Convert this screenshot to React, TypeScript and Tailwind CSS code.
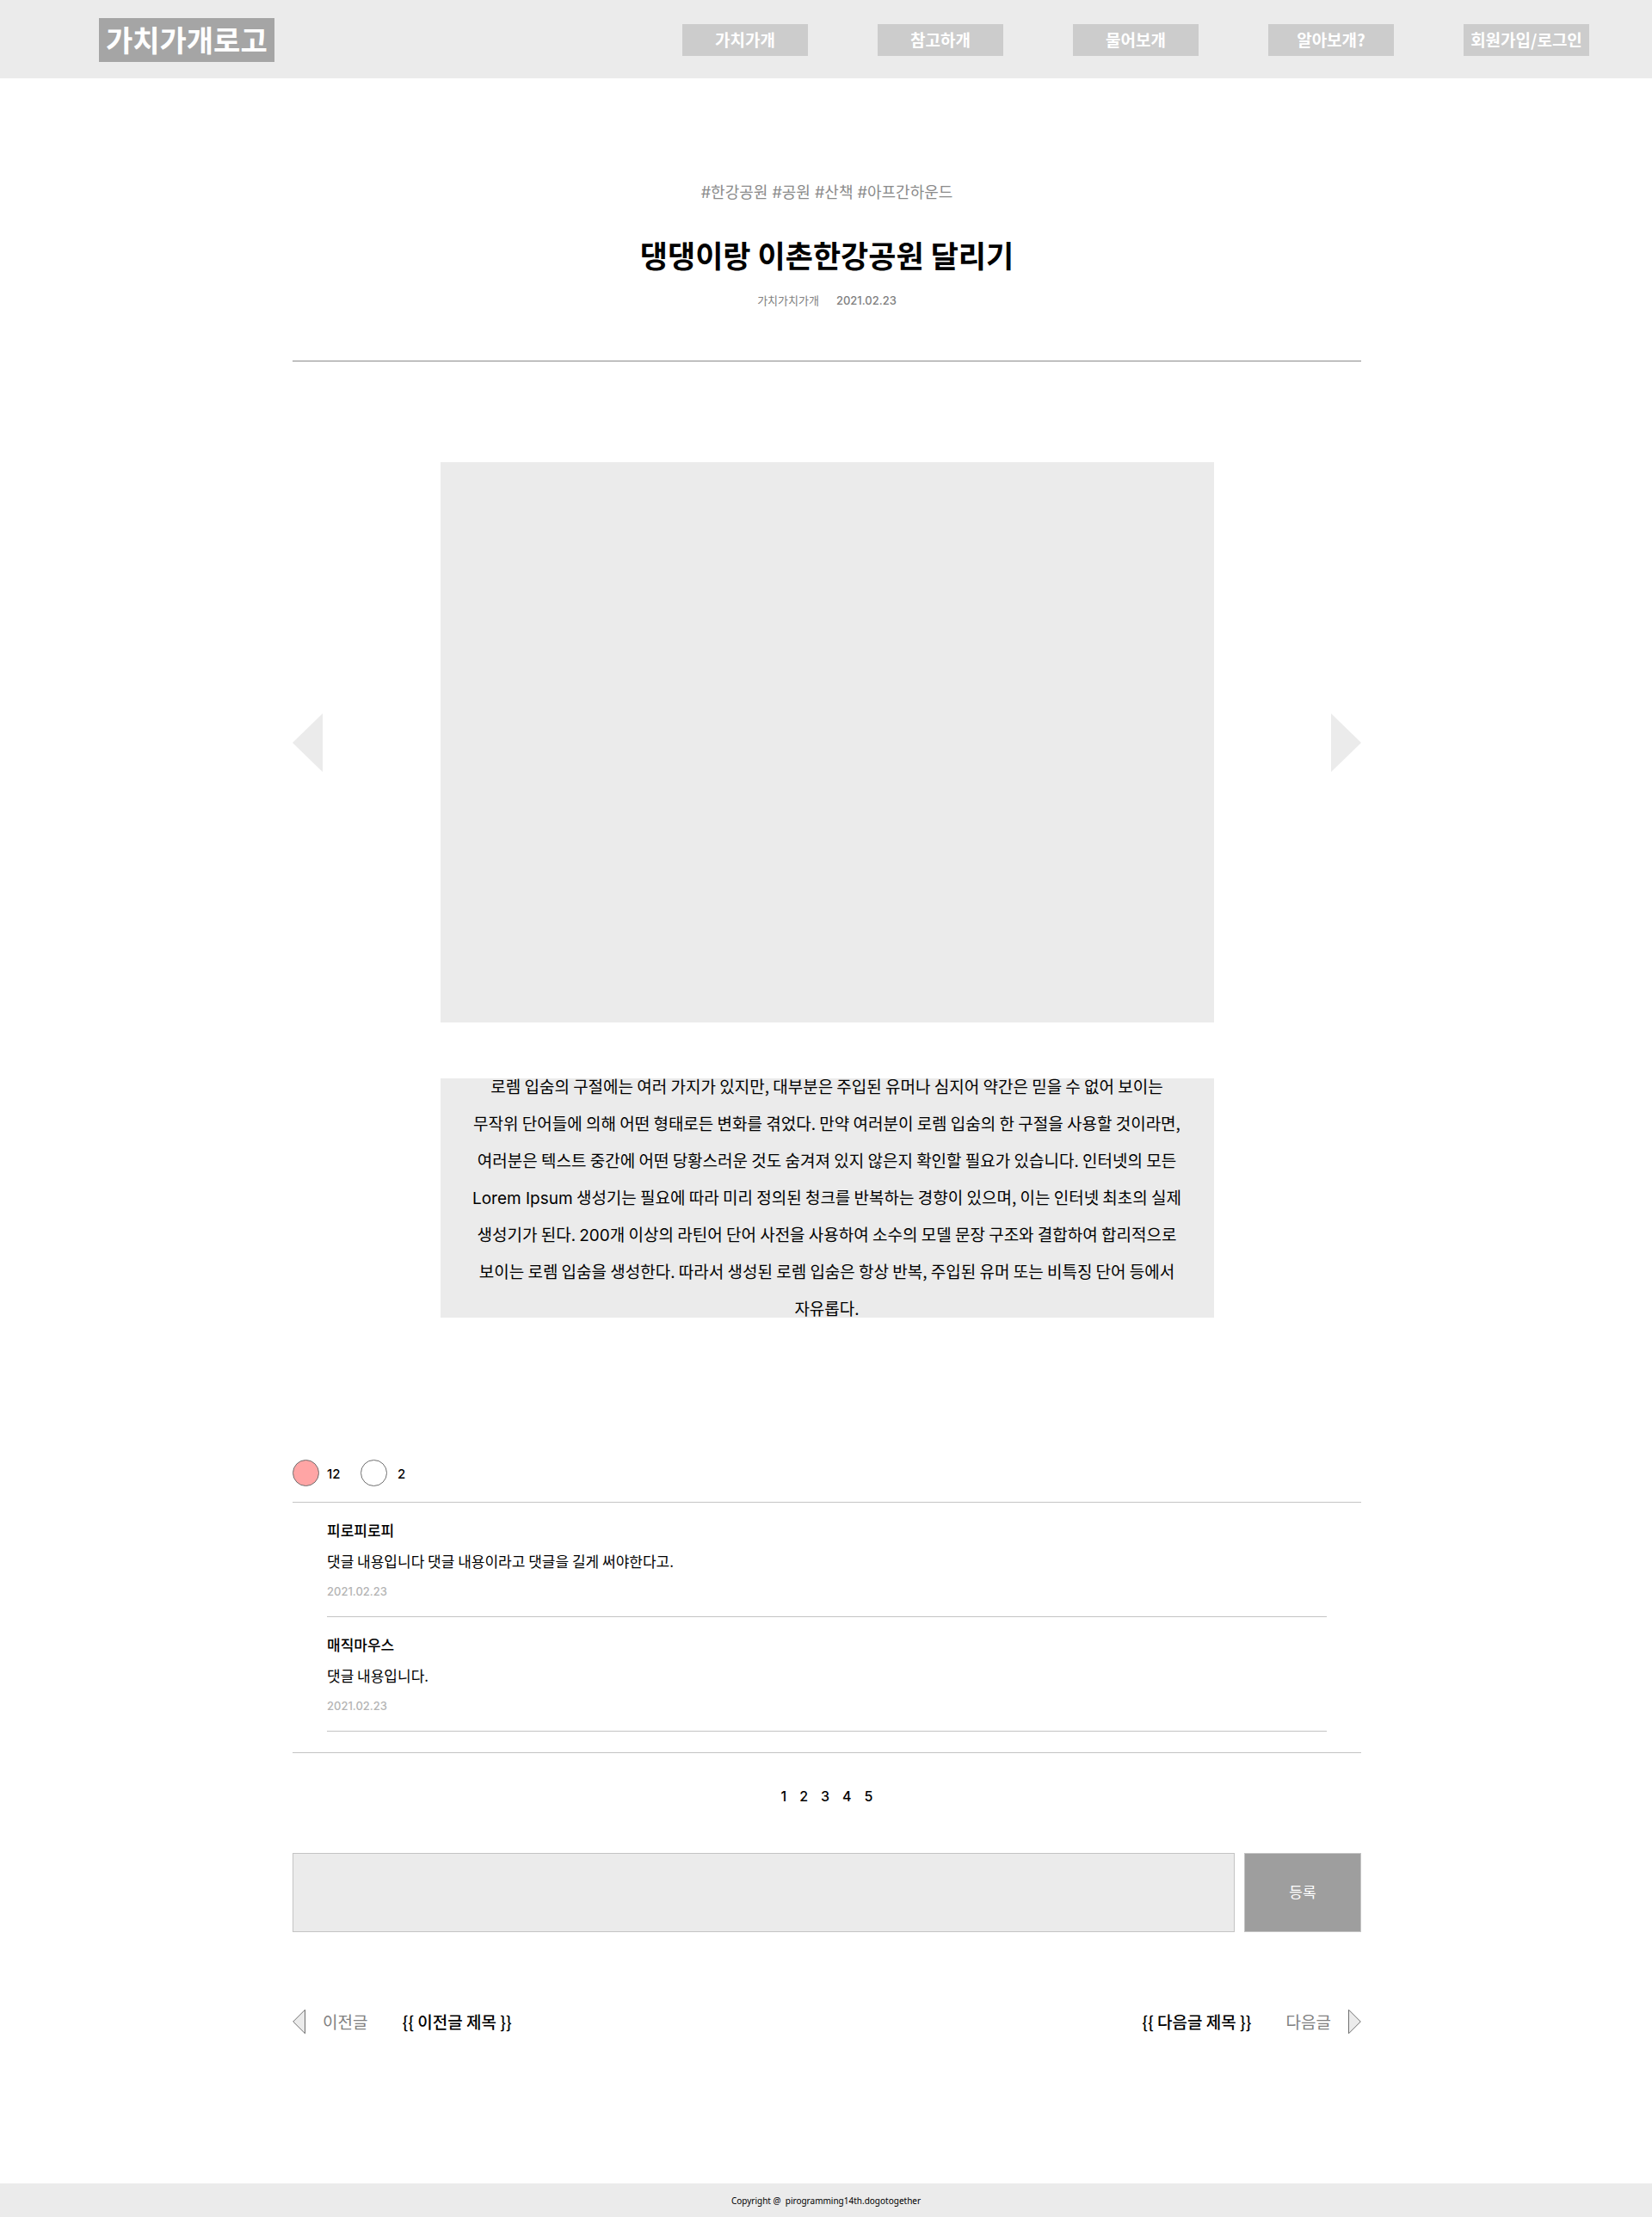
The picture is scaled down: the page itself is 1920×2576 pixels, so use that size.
const kr = "font-['Noto_Sans_CJK_KR','Noto_Sans',sans-serif]";
const latin = "font-['Inter','Noto_Sans_CJK_KR',sans-serif]";

const menu = ["가치가개", "참고하개", "물어보개", "알아보개?", "회원가입/로그인"];
const pages = [1, 2, 3, 4, 5];
const comments = [
  {
    author: "피로피로피",
    text: "댓글 내용입니다 댓글 내용이라고 댓글을 길게 써야한다고.",
    date: "2021.02.23",
  },
  { author: "매직마우스", text: "댓글 내용입니다.", date: "2021.02.23" },
];

function Header() {
  return (
    <header className="flex items-center justify-between bg-[#ebebeb] pt-[21px] pr-[73px] pb-[19px] pl-[115px]">
      <a
        href="#"
        className="bg-[#a5a5a5] px-2 pb-0.5 text-[34px] leading-[49px] font-bold whitespace-nowrap text-white"
      >
        가치가개로고
      </a>
      <nav className="-mt-px flex gap-[81px]">
        {menu.map((item) => (
          <a
            key={item}
            href="#"
            className="w-[146px] bg-[#cccccc] pb-0.5 text-center text-[19px] leading-[35px] font-bold whitespace-nowrap text-white"
          >
            {item}
          </a>
        ))}
      </nav>
    </header>
  );
}

function SlideArrow({ label, points }: { label: string; points: string }) {
  return (
    <button type="button" aria-label={label} className="shrink-0">
      <svg width="35" height="68" viewBox="0 0 35 68" className="fill-[#ebebeb]">
        <polygon points={points} />
      </svg>
    </button>
  );
}

function PostArrow({ points }: { points: string }) {
  return (
    <svg
      width="15"
      height="30"
      viewBox="0 0 15 30"
      aria-hidden="true"
      className="shrink-0 fill-[#ebebeb] stroke-[#707070]"
    >
      <polygon points={points} />
    </svg>
  );
}

export default function App() {
  return (
    <div className={`bg-white text-black ${kr}`}>
      <Header />

      <main className="mx-auto max-w-[1244px] pl-0.5">
        <article>
          <div className="border-b border-[#8b8b8b] pt-[119px] pb-[60px] text-center">
            <p className={`text-[18px] leading-7 text-[#8b8b8b] ${latin}`}>
              #한강공원 #공원 #산책 #아프간하운드
            </p>
            <h1 className="mt-[34px] text-[35px] leading-12 font-bold">
              댕댕이랑 이촌한강공원 달리기
            </h1>
            <p className="mt-[19px] flex justify-center gap-5 text-[13px] leading-5 text-[#808080]">
              <span>가치가치가개</span>
              <time className={`font-medium ${latin}`}>2021.02.23</time>
            </p>
          </div>

          <div className="mt-[117px] flex items-center justify-between gap-10">
            <SlideArrow label="이전 사진" points="0,34 35,0 35,68" />
            <div className="h-[651px] w-[899px] bg-[#ebebeb]" />
            <SlideArrow label="다음 사진" points="35,34 0,0 0,68" />
          </div>

          <div className="mx-auto mt-[65px] flex h-[278px] max-w-[899px] items-center justify-center bg-[#ebebeb] pb-1">
            <p className="max-w-[840px] text-center text-[19px] leading-[43px] break-keep">
              로렘 입숨의 구절에는 여러 가지가 있지만, 대부분은 주입된 유머나 심지어 약간은 믿을 수
              없어 보이는
              <br />
              무작위 단어들에 의해 어떤 형태로든 변화를 겪었다. 만약 여러분이 로렘 입숨의 한 구절을
              사용할 것이라면, 여러분은 텍스트 중간에 어떤 당황스러운 것도 숨겨져 있지 않은지 확인할
              필요가 있습니다. 인터넷의 모든
              <br />
              <span className={`leading-none ${latin}`}>Lorem Ipsum</span> 생성기는 필요에 따라 미리
              정의된 청크를 반복하는 경향이 있으며, 이는 인터넷 최초의 실제
              <br />
              생성기가 된다. <span className={`leading-none ${latin}`}>200</span>개 이상의 라틴어
              단어 사전을 사용하여 소수의 모델 문장 구조와 결합하여 합리적으로
              <br />
              보이는 로렘 입숨을 생성한다. 따라서 생성된 로렘 입숨은 항상 반복, 주입된 유머 또는
              비특징 단어 등에서
              <br />
              자유롭다.
            </p>
          </div>
        </article>

        <div className={`mt-[165px] flex items-center text-[15px] leading-5 font-medium ${latin}`}>
          <button type="button" className="flex items-center gap-[9px]">
            <span className="size-[31px] rounded-full border border-[#707070] bg-[#ffa5a5]" />
            <span className="w-[39px] pt-0.5 text-left">12</span>
          </button>
          <button type="button" className="flex items-center gap-3">
            <span className="size-[31px] rounded-full border border-[#707070] bg-white" />
            <span className="pt-0.5">2</span>
          </button>
        </div>

        <ul className="mt-[18px] border-y border-[#c4c4c4] px-10 pb-6">
          {comments.map((comment) => (
            <li key={comment.author} className="border-b border-[#c4c4c4] pt-5 pb-[19px]">
              <h2 className="text-[17px] leading-6 font-medium">{comment.author}</h2>
              <p className="mt-3 text-[17px] leading-6">{comment.text}</p>
              <time
                className={`mt-[13px] block text-[13px] leading-5 font-medium text-[#b4b4b4] ${latin}`}
              >
                {comment.date}
              </time>
            </li>
          ))}
        </ul>

        <nav
          aria-label="댓글 페이지"
          className={`mt-[38px] flex justify-center gap-[15px] text-[16px] leading-6 font-medium ${latin}`}
        >
          {pages.map((page) => (
            <a key={page} href="#">
              {page}
            </a>
          ))}
        </nav>

        <form className="mt-[54px] flex gap-[11px]" onSubmit={(e) => e.preventDefault()}>
          <textarea
            aria-label="댓글 작성"
            className="h-[92px] flex-1 resize-none border border-[#c4c4c4] bg-[#ebebeb] p-4 text-[17px]"
          />
          <button
            type="submit"
            className="w-[136px] border border-[#c4c4c4] bg-[#9e9e9e] pb-0.5 text-[17px] leading-6 text-white"
          >
            등록
          </button>
        </form>

        <nav
          aria-label="다른 글"
          className="mt-[89px] flex justify-between text-[19px] leading-[30px]"
        >
          <a href="#" className="flex items-center">
            <PostArrow points="0.7,15 14.5,1.2 14.5,28.8" />
            <span className="ml-5 text-[#808080]">이전글</span>
            <span className="ml-10 font-medium">{"{{ 이전글 제목 }}"}</span>
          </a>
          <a href="#" className="flex items-center">
            <span className="mr-10 font-medium">{"{{ 다음글 제목 }}"}</span>
            <span className="mr-5 text-[#808080]">다음글</span>
            <PostArrow points="14.3,15 0.5,1.2 0.5,28.8" />
          </a>
        </nav>
      </main>

      <footer className="mt-[173px] bg-[#ebebeb] pt-0.5 text-center font-['Noto_Sans',sans-serif] text-[10px] leading-[37px] whitespace-pre">
        {"Copyright @  pirogramming14th.dogotogether"}
      </footer>
    </div>
  );
}
